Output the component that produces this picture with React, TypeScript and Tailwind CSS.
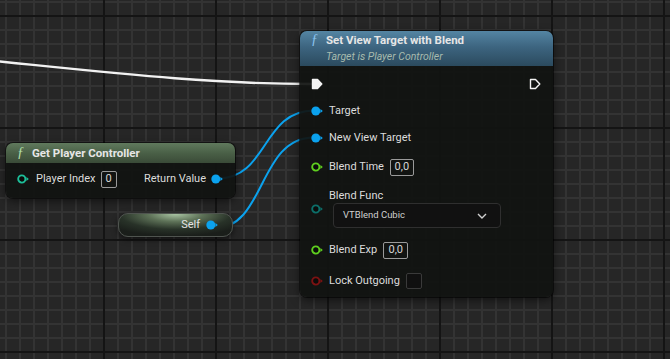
import type { ReactNode } from 'react'

const BLUE = '#0ba2ee'

/** Data pin: ring or filled dot with the little arrow on its right. */
function Pin({ color, filled = false }: { color: string; filled?: boolean }) {
  return (
    <svg width="12" height="10" viewBox="0 0 12 10" className="shrink-0">
      {filled ? (
        <circle cx="4.8" cy="5" r="4.5" fill={color} />
      ) : (
        <circle cx="4.8" cy="5" r="3.6" fill="#0b0c0b" stroke={color} strokeWidth="1.9" />
      )}
      <path d="M9.4 3.1 L11.8 5 L9.4 6.9 Z" fill={color} />
    </svg>
  )
}

function ExecPin({ filled = false }: { filled?: boolean }) {
  return (
    <svg width="12" height="12" viewBox="0 0 12 12" className="shrink-0">
      <path
        d="M1.5 1.5 H6.5 L10.8 6 L6.5 10.5 H1.5 Z"
        fill={filled ? '#f4f4f4' : 'none'}
        stroke="#f4f4f4"
        strokeWidth="1.4"
        strokeLinejoin="round"
      />
    </svg>
  )
}

function ValueBox({ children, width }: { children: ReactNode; width: string }) {
  return (
    <span
      className={`${width} flex h-[17px] items-center justify-center rounded-[2px] border border-[#9a9a9a] text-[11px] text-[#d6d6d6]`}
    >
      {children}
    </span>
  )
}

function Row({ children, className = '' }: { children: ReactNode; className?: string }) {
  return <div className={`flex h-[20px] items-center pl-[11px] ${className}`}>{children}</div>
}

function GraphBackground() {
  const minorX = Array.from({ length: 48 }, (_, i) => 5 + i * 14)
  const minorY = Array.from({ length: 27 }, (_, i) => 1 + i * 14)
  const majorX = [103, 215, 327, 439, 551, 663]
  const majorY = [15, 127, 239, 351]

  return (
    <svg className="absolute inset-0" width="670" height="359" viewBox="0 0 670 359">
      <rect width="670" height="359" fill="#262626" />
      {minorX.map((x) => (
        <rect key={`mx${x}`} x={x} y="0" width="2" height="359" fill="#333333" />
      ))}
      {minorY.map((y) => (
        <rect key={`my${y}`} x="0" y={y} width="670" height="2" fill="#333333" />
      ))}
      {majorX.map((x) => (
        <rect key={`Mx${x}`} x={x} y="0" width="2" height="359" fill="#141414" />
      ))}
      {majorY.map((y) => (
        <rect key={`My${y}`} x="0" y={y} width="670" height="2" fill="#141414" />
      ))}

      {/* exec wire */}
      <path d="M-100 52 C 60 66, 180 84, 312 84" fill="none" stroke="#f2f2f2" strokeWidth="2.4" />
      {/* object wires */}
      <path d="M218 178.5 C 268 178.5, 262 110.5, 314 110.5" fill="none" stroke={BLUE} strokeWidth="2" />
      <path d="M214 228.5 C 266 228.5, 258 137.5, 314 137.5" fill="none" stroke={BLUE} strokeWidth="2" />
    </svg>
  )
}

function SetViewTargetNode() {
  return (
    <div className="absolute left-[300px] top-[31px] flex h-[266px] w-[253px] flex-col overflow-hidden rounded-[7px] bg-[rgba(17,19,17,0.93)] font-['Roboto',sans-serif] shadow-[0_0_0_1px_rgba(0,0,0,0.55),0_3px_10px_rgba(0,0,0,0.55)]">
      <div className="h-[35px] shrink-0 bg-[linear-gradient(180deg,#5485a3_0%,#3d6580_45%,#2b4a5e_100%)] pt-[2px]">
        <div className="flex h-[14px] items-center">
          <span className="w-[26px] pl-[11px] font-['Liberation_Serif',serif] text-[14px] italic leading-[14px] text-[#8cc4f0]">
            ƒ
          </span>
          <span className="text-[11.5px] font-bold leading-[14px] text-[#e6e6e6]">Set View Target with Blend</span>
        </div>
        <div className="mt-[3px] h-[14px] pl-[26px] text-[10.5px] italic leading-[14px] text-[#a7bbae]">
          Target is Player Controller
        </div>
      </div>

      <div className="flex h-[35px] shrink-0 items-center justify-between pl-[11px] pr-[12px] pt-[1px]">
        <ExecPin filled />
        <ExecPin />
      </div>

      <Row className="gap-[6px]">
        <Pin color={BLUE} filled />
        <span className="text-[11px] text-[#dcdcdc]">Target</span>
      </Row>
      <Row className="mt-[7px] gap-[6px]">
        <Pin color={BLUE} filled />
        <span className="text-[11px] text-[#dcdcdc]">New View Target</span>
      </Row>
      <Row className="mt-[9px] gap-[6px]">
        <Pin color="#5fcf1f" />
        <span className="text-[11px] text-[#dcdcdc]">Blend Time</span>
        <ValueBox width="w-[24px]">0,0</ValueBox>
      </Row>

      <div className="mt-[12px] flex gap-[6px] pl-[11px]">
        <div className="mt-[15px]">
          <Pin color="#0c6f69" />
        </div>
        <div className="flex flex-col">
          <span className="h-[14px] text-[11px] leading-[14px] text-[#dcdcdc]">Blend Func</span>
          <div className="ml-[4px] flex h-[25px] w-[168px] items-center justify-between rounded-[4px] border border-[#2f2f2f] bg-[#111111] pl-[9px] pr-[13px]">
            <span className="text-[9.5px] text-[#cfcfcf]">VTBlend Cubic</span>
            <svg width="10" height="6" viewBox="0 0 10 6">
              <path d="M1 1 L5 5 L9 1" fill="none" stroke="#d0d0d0" strokeWidth="1.4" />
            </svg>
          </div>
        </div>
      </div>

      <Row className="mt-[12px] gap-[6px]">
        <Pin color="#5fcf1f" />
        <span className="text-[11px] text-[#dcdcdc]">Blend Exp</span>
        <ValueBox width="w-[25px]">0,0</ValueBox>
      </Row>
      <Row className="mt-[11px] gap-[6px]">
        <Pin color="#7c1212" />
        <span className="text-[11px] text-[#dcdcdc]">Lock Outgoing</span>
        <span className="h-[16px] w-[16px] rounded-[2px] border border-[#3a3a3a] bg-[#101010]" />
      </Row>
    </div>
  )
}

function GetPlayerControllerNode() {
  return (
    <div className="absolute left-[6px] top-[143px] flex h-[55px] w-[229px] flex-col overflow-hidden rounded-[7px] bg-[rgba(17,19,17,0.93)] font-['Roboto',sans-serif] shadow-[0_0_0_1px_rgba(0,0,0,0.55),0_3px_10px_rgba(0,0,0,0.55)]">
      <div className="flex h-[20px] shrink-0 items-center bg-[linear-gradient(180deg,#60795d_0%,#4a6047_50%,#3a4b38_100%)]">
        <span className="w-[26px] pl-[11px] font-['Liberation_Serif',serif] text-[14px] italic leading-[14px] text-[#b4e0ac]">
          ƒ
        </span>
        <span className="text-[11.5px] font-bold leading-[14px] text-[#e6e6e6]">Get Player Controller</span>
      </div>
      <div className="mt-[6px] flex h-[20px] items-center justify-between pl-[11px] pr-[12px]">
        <div className="flex items-center">
          <Pin color="#1dbf99" />
          <span className="ml-[7px] mr-[5px] text-[11px] text-[#dcdcdc]">Player Index</span>
          <ValueBox width="w-[16px]">0</ValueBox>
        </div>
        <div className="flex items-center gap-[5px]">
          <span className="text-[11px] text-[#dcdcdc]">Return Value</span>
          <Pin color={BLUE} filled />
        </div>
      </div>
    </div>
  )
}

function SelfNode() {
  return (
    <div className="absolute left-[118px] top-[213px] flex h-[24px] w-[115px] items-center justify-end gap-[6px] rounded-[10px] border border-[#4f544f] bg-[radial-gradient(ellipse_70%_100%_at_50%_0%,#a9c4a3_0%,#5d7157_35%,#283228_70%,#1a1e1a_100%)] pr-[14px] font-['Roboto',sans-serif] shadow-[0_2px_6px_rgba(0,0,0,0.6)]">
      <span className="text-[11px] text-[#e4e4e4]">Self</span>
      <Pin color={BLUE} filled />
    </div>
  )
}

export default function App() {
  return (
    <div className="relative h-[359px] w-[670px] overflow-hidden bg-[#262626]">
      <GraphBackground />
      <GetPlayerControllerNode />
      <SelfNode />
      <SetViewTargetNode />
    </div>
  )
}
